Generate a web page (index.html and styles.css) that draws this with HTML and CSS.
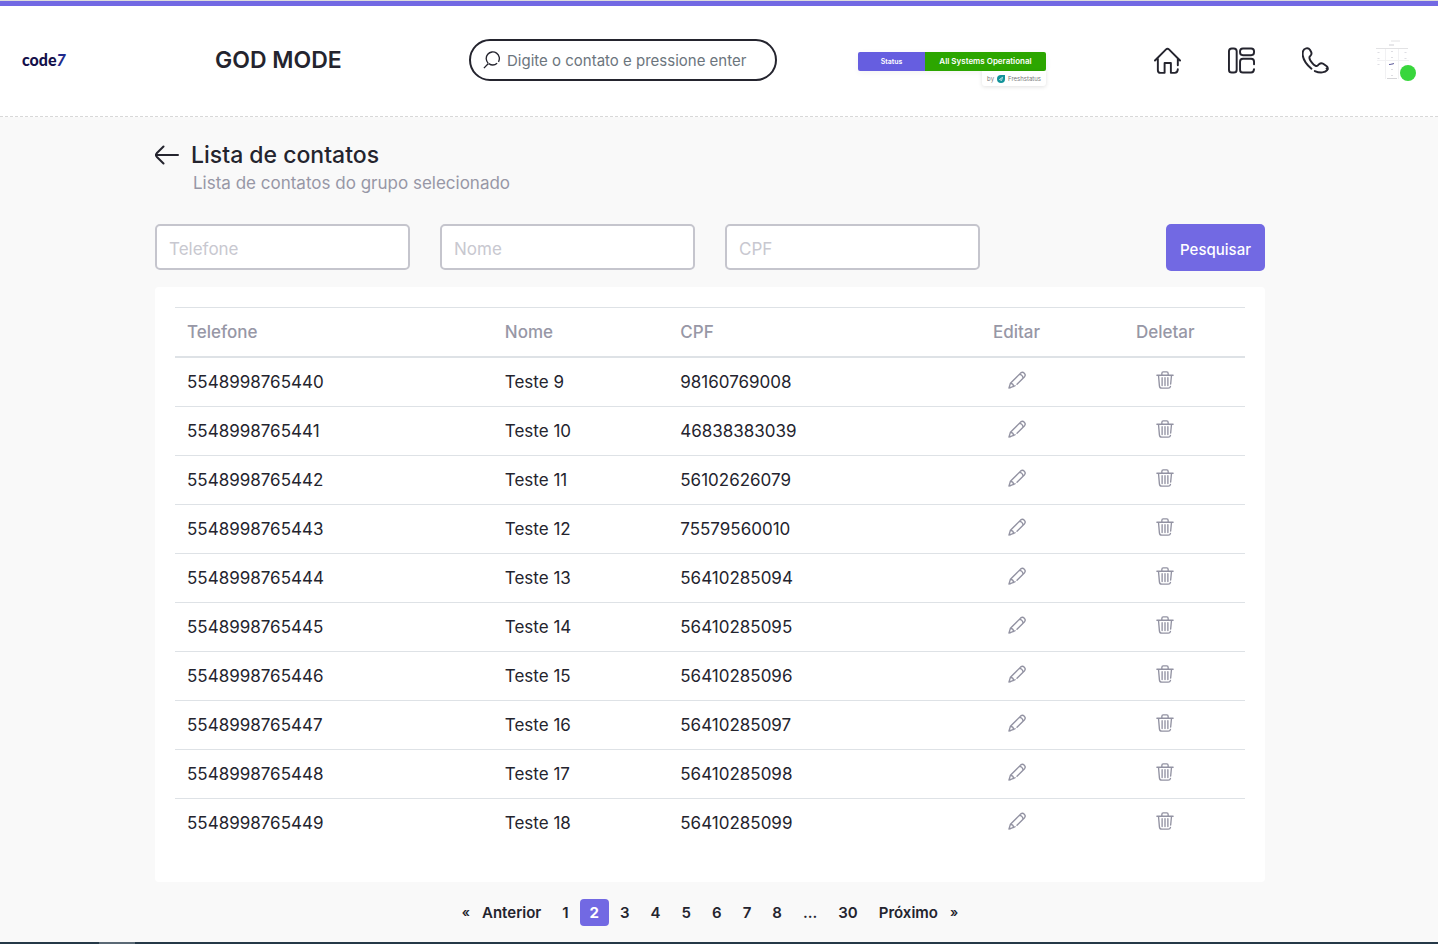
FILE: index.html
```
<!DOCTYPE html>
<html lang="pt-BR">
<head>
<meta charset="utf-8">
<meta name="viewport" content="width=device-width, initial-scale=1">
<title>Lista de contatos</title>
<link rel="stylesheet" href="styles.css">
</head>
<body>
<svg class="sprite" aria-hidden="true">
  <symbol id="pencil" viewBox="0 0 20 20">
    <path d="M6.2 17.2 1 19l1.700-5.300M2.700 13.700 14.200 2.100q2-1.600 3.900.3t.3 3.900L10 14.700M2.700 13.700q3.500.3 3.500 3.500l1.700-.8M12.600 3.700q3.500.2 4.100 4.100M1.500 17.500l1.200 1.200"/>
  </symbol>
  <symbol id="trash" viewBox="0 0 20 20">
    <path d="M1 4.700h18M6.500 4.500V2.800q0-1.800 1.500-1.800h4q1.500 0 1.500 1.800v1.700M2.800 5l1 11.500q.2 2.500 2.600 2.500h7.200q2.100 0 2.500-1.900M17.200 5 16.300 14.500M6.800 7.500v8.600M10 7.500v8.600M13.200 7.500v8.600"/>
  </symbol>
</svg>

<header class="topbar">
  <a class="logo" href="#">code<span class="logo-seven">7</span></a>
  <p class="mode">GOD MODE</p>
  <label class="search">
    <svg class="search-icon" viewBox="0 0 20 20" aria-hidden="true"><path d="M1 19 6 13.800M5.700 13.500A7.300 7.300 0 1 1 17.200 12M15.700 13.500A7.300 7.300 0 0 1 6.500 14"/></svg>
    <input class="search-input" type="text" aria-label="Buscar contato" placeholder="Digite o contato e pressione enter">
  </label>
  <a class="status" href="#">
    <span class="status-bar"><span class="status-label">Status</span><span class="status-value">All Systems Operational</span></span>
    <span class="status-by">by
      <svg class="status-icon" viewBox="0 0 8 8" aria-hidden="true"><path d="M4 0h4v4a4 4 0 1 1-4-4z" fill="#12939a"/><path d="M2.500 4.500 5.500 2.300 4.600 5.500z" fill="none" stroke="#fff" stroke-width=".7"/></svg>
      Freshstatus</span>
  </a>
  <nav class="actions" aria-label="Principal">
    <a class="action" href="#" aria-label="Início"><svg class="action-icon" viewBox="0 0 28 28" aria-hidden="true"><path d="M1 14 12.500 2.500q1.500-1.500 3 0L27 14M4 12v12q0 2.800 2.800 2.800H11V16.500h6.500v10.300h4q3 0 3.200-3.800M24.700 12v7"/></svg></a>
    <a class="action" href="#" aria-label="Painel"><svg class="action-icon" viewBox="0 0 28 28" aria-hidden="true"><rect x="1" y="1.500" width="8" height="25" rx="3"/><rect x="12.500" y="1.500" width="14.500" height="7" rx="3"/><path d="M27 18V15.200q0-3-3-3h-8.500q-3 0-3 3v8.300q0 3 3 3H24q2.800 0 3-3.500"/></svg></a>
    <a class="action" href="#" aria-label="Telefone"><svg class="action-icon" viewBox="0 0 28 28" aria-hidden="true"><path d="M9.800 22.500C5 18.500 1.500 13.500.8 8.800.3 5 1.800 2 4.300 1.400c1.600-.4 3 0 3.900 1.400l1.300 2.400c.7 1.400.3 2.600-.5 3.600l-1 1.200c-1 1.500.7 4.300 2.700 6.700s4.200 3.800 5.500 2.600l1.500-1.500c1.500-1.300 2.900-1.300 4.300-.4l3.300 2.300c1.500 1.100 2 2.600.8 4.200-2 2.700-7.200 3.500-12.800 1M25.500 22.300l1.300.6"/></svg></a>
    <button class="avatar" type="button" aria-label="Perfil">
      <svg class="avatar-image" viewBox="0 0 40 40" aria-hidden="true">
        <path d="M15 1h9M0 8.500h32" stroke="#e2e2e4"/><path d="M13 5h5" stroke="#cfcfd4"/>
        <path d="M9.500 9v30M22.500 9v30M1 20.500h32" stroke="#f1f1f3"/><path d="M11 38.500h10" stroke="#d5d5d8"/>
        <path d="M2.500 12v17M16 11v27M29.500 12v8" stroke="#dedee3" stroke-width="2" stroke-dasharray="1 5"/>
        <path d="M13 24.500q3 0 5-1" stroke="#625f9f" fill="none"/>
      </svg>
      <span class="avatar-dot"></span>
    </button>
  </nav>
</header>

<main class="content">
  <div class="heading">
    <a class="back" href="#" aria-label="Voltar"><svg class="back-icon" viewBox="0 0 24 20" aria-hidden="true"><path d="M23 10H1M8.500 1.500 1.700 8.300q-1.500 1.700 0 3.400l6.800 6.800"/></svg></a>
    <h1 class="title">Lista de contatos</h1>
    <p class="subtitle">Lista de contatos do grupo selecionado</p>
  </div>
  <form class="filters">
    <input class="field" type="text" aria-label="Telefone" placeholder="Telefone">
    <input class="field" type="text" aria-label="Nome" placeholder="Nome">
    <input class="field" type="text" aria-label="CPF" placeholder="CPF">
    <button class="submit" type="button">Pesquisar</button>
  </form>
  <section class="card">
    <table class="contacts">
      <colgroup><col class="col-phone"><col class="col-name"><col class="col-cpf"><col class="col-edit"><col class="col-delete"></colgroup>
      <thead>
        <tr><th>Telefone</th><th>Nome</th><th>CPF</th><th class="center">Editar</th><th class="center">Deletar</th></tr>
      </thead>
      <tbody>
        <tr><td>5548998765440</td><td>Teste 9</td><td>98160769008</td><td class="center"><button class="tool" type="button" aria-label="Editar"><svg class="tool-icon"><use href="#pencil"/></svg></button></td><td class="center"><button class="tool" type="button" aria-label="Deletar"><svg class="tool-icon"><use href="#trash"/></svg></button></td></tr>
        <tr><td>5548998765441</td><td>Teste 10</td><td>46838383039</td><td class="center"><button class="tool" type="button" aria-label="Editar"><svg class="tool-icon"><use href="#pencil"/></svg></button></td><td class="center"><button class="tool" type="button" aria-label="Deletar"><svg class="tool-icon"><use href="#trash"/></svg></button></td></tr>
        <tr><td>5548998765442</td><td>Teste 11</td><td>56102626079</td><td class="center"><button class="tool" type="button" aria-label="Editar"><svg class="tool-icon"><use href="#pencil"/></svg></button></td><td class="center"><button class="tool" type="button" aria-label="Deletar"><svg class="tool-icon"><use href="#trash"/></svg></button></td></tr>
        <tr><td>5548998765443</td><td>Teste 12</td><td>75579560010</td><td class="center"><button class="tool" type="button" aria-label="Editar"><svg class="tool-icon"><use href="#pencil"/></svg></button></td><td class="center"><button class="tool" type="button" aria-label="Deletar"><svg class="tool-icon"><use href="#trash"/></svg></button></td></tr>
        <tr><td>5548998765444</td><td>Teste 13</td><td>56410285094</td><td class="center"><button class="tool" type="button" aria-label="Editar"><svg class="tool-icon"><use href="#pencil"/></svg></button></td><td class="center"><button class="tool" type="button" aria-label="Deletar"><svg class="tool-icon"><use href="#trash"/></svg></button></td></tr>
        <tr><td>5548998765445</td><td>Teste 14</td><td>56410285095</td><td class="center"><button class="tool" type="button" aria-label="Editar"><svg class="tool-icon"><use href="#pencil"/></svg></button></td><td class="center"><button class="tool" type="button" aria-label="Deletar"><svg class="tool-icon"><use href="#trash"/></svg></button></td></tr>
        <tr><td>5548998765446</td><td>Teste 15</td><td>56410285096</td><td class="center"><button class="tool" type="button" aria-label="Editar"><svg class="tool-icon"><use href="#pencil"/></svg></button></td><td class="center"><button class="tool" type="button" aria-label="Deletar"><svg class="tool-icon"><use href="#trash"/></svg></button></td></tr>
        <tr><td>5548998765447</td><td>Teste 16</td><td>56410285097</td><td class="center"><button class="tool" type="button" aria-label="Editar"><svg class="tool-icon"><use href="#pencil"/></svg></button></td><td class="center"><button class="tool" type="button" aria-label="Deletar"><svg class="tool-icon"><use href="#trash"/></svg></button></td></tr>
        <tr><td>5548998765448</td><td>Teste 17</td><td>56410285098</td><td class="center"><button class="tool" type="button" aria-label="Editar"><svg class="tool-icon"><use href="#pencil"/></svg></button></td><td class="center"><button class="tool" type="button" aria-label="Deletar"><svg class="tool-icon"><use href="#trash"/></svg></button></td></tr>
        <tr><td>5548998765449</td><td>Teste 18</td><td>56410285099</td><td class="center"><button class="tool" type="button" aria-label="Editar"><svg class="tool-icon"><use href="#pencil"/></svg></button></td><td class="center"><button class="tool" type="button" aria-label="Deletar"><svg class="tool-icon"><use href="#trash"/></svg></button></td></tr>
      </tbody>
    </table>
  </section>
  <nav class="pagination" aria-label="Paginação">
    <a class="page page-step" href="#"><span class="page-arrow">«</span><span>Anterior</span></a>
    <a class="page" href="#">1</a>
    <a class="page page-current" href="#" aria-current="page">2</a>
    <a class="page" href="#">3</a>
    <a class="page" href="#">4</a>
    <a class="page" href="#">5</a>
    <a class="page" href="#">6</a>
    <a class="page" href="#">7</a>
    <a class="page" href="#">8</a>
    <span class="page">...</span>
    <a class="page" href="#">30</a>
    <a class="page page-step" href="#"><span>Próximo</span><span class="page-arrow">»</span></a>
  </nav>
</main>
<footer class="bottom-strip"></footer>
</body>
</html>
```
FILE: styles.css
```
* { box-sizing: border-box; }

body {
  margin: 0;
  min-height: 100vh;
  display: flex;
  flex-direction: column;
  background: #f9f9f9;
  color: #24242e;
  font-family: Inter, "Liberation Sans", sans-serif;
  font-size: 17px;
  line-height: 24px;
}

a { color: inherit; text-decoration: none; }
button, input { font: inherit; }
button { padding: 0; border: 0; background: none; cursor: pointer; }
svg { display: block; }
p, h1 { margin: 0; }

.sprite { position: absolute; width: 0; height: 0; }

.topbar {
  display: grid;
  grid-template-columns: 193fr 254fr 389fr 296fr 262fr;
  align-items: center;
  padding: 34px 22px 30px;
  background: #fff;
  border-bottom: 1px dashed #d8d8d8;
  box-shadow: inset 0 1px #dcdcdc, inset 0 6px #7269e3;
}

.logo {
  color: #14104a;
  font: 900 16px/20px Lato, sans-serif;
}
.logo-seven { color: #1f2a8c; font-style: italic; }

.mode { font-size: 23px; font-weight: 600; }

.search {
  display: flex;
  align-items: center;
  gap: 6px;
  width: 308px;
  height: 42px;
  padding: 0 12px;
  border: 2px solid #24242e;
  border-radius: 21px;
}
.search-icon { flex: none; width: 18px; height: 18px; fill: none; stroke: #24242e; stroke-width: 1.5; }
.search-input {
  flex: 1;
  min-width: 0;
  padding: 2px 0 0;
  border: 0;
  outline: 0;
  background: none;
  font-size: 15px;
}
.search-input::placeholder { color: #6c757d; opacity: 1; }

.status {
  display: flex;
  flex-direction: column;
  align-items: flex-end;
  width: 188px;
  padding-top: 18px;
}
.status-bar {
  display: grid;
  grid-template-columns: 67px 1fr;
  width: 100%;
  line-height: 19px;
  border-radius: 2px;
  overflow: hidden;
  color: #fff;
  font-weight: 600;
  text-align: center;
  box-shadow: 0 2px 6px #0000000d;
}
.status-label { background: #665ee0; font-size: 7px; }
.status-value { background: #2ca600; font-size: 8px; }
.status-by {
  display: flex;
  align-items: center;
  gap: 3px;
  padding: 0 5px;
  border-radius: 0 0 3px 3px;
  background: #fff;
  color: #777;
  font-size: 6px;
  line-height: 15px;
  box-shadow: 0 1px 4px #0000001f;
}
.status-icon { width: 8px; height: 8px; }

.actions { display: flex; justify-content: space-between; align-items: center; }
.action-icon { width: 27px; height: 27px; fill: none; stroke: #24242e; stroke-width: 2; stroke-linecap: round; stroke-linejoin: round; }
.avatar { position: relative; width: 40px; height: 42px; }
.avatar-image { width: 40px; height: 40px; }
.avatar-dot {
  position: absolute;
  right: 0;
  bottom: 0;
  width: 16px;
  height: 16px;
  border-radius: 50%;
  background: #38d63c;
}

.content {
  flex: 1;
  width: 100%;
  max-width: 1128px;
  padding: 24px 18px 16px 0;
  align-self: center;
}

.heading {
  display: grid;
  grid-template-columns: 24px 1fr;
  column-gap: 12px;
  align-items: center;
}
.back-icon { width: 24px; height: 20px; fill: none; stroke: #24242e; stroke-width: 2; stroke-linecap: round; }
.title { font-size: 23px; line-height: 28px; font-weight: 500; }
.subtitle { grid-column: 2; padding-left: 2px; line-height: 28px; color: #9797a6; }

.filters {
  display: grid;
  grid-template-columns: repeat(4, 1fr);
  gap: 30px;
  margin-top: 27px;
}
.field {
  width: 100%;
  min-width: 0;
  height: 46px;
  padding: 4px 12px 0;
  border: 2px solid #c5c5cd;
  border-radius: 5px;
  background: #fff;
  color: #24242e;
}
.field::placeholder { color: #c8c8d0; opacity: 1; }
.submit {
  justify-self: end;
  height: 47px;
  padding: 4px 14px 0;
  border-radius: 5px;
  background: #7269e3;
  color: #fff;
  font-size: 15px;
  font-weight: 500;
}

.card { margin-top: 16px; padding: 20px 20px 35px; border-radius: 4px; background: #fff; }

.contacts { width: 100%; table-layout: fixed; border-collapse: separate; border-spacing: 0; }
.col-phone { width: 29.7%; }
.col-name { width: 16.4%; }
.col-cpf { width: 26.1%; }
.col-edit { width: 12.9%; }
.col-delete { width: 14.9%; }
.contacts th, .contacts td { padding: 12px; text-align: left; }
.contacts th {
  border-top: 1px solid #dee2e6;
  border-bottom: 2px solid #dee2e6;
  color: #9797a6;
  font-weight: 500;
}
.contacts td { border-top: 1px solid #dee2e6; }
.contacts tbody tr:first-child td { border-top: 0; }
.contacts .center { text-align: center; }
.contacts td.center { padding: 0 12px 6px; }
.tool { display: inline-block; vertical-align: middle; color: #9292a2; }
.tool-icon { width: 18px; height: 18px; fill: none; stroke: currentColor; stroke-width: 1.5; stroke-linecap: round; stroke-linejoin: round; }

.pagination {
  display: flex;
  justify-content: center;
  gap: 1px;
  margin-top: 17px;
  font-size: 15px;
  line-height: 27px;
  font-weight: 600;
}
.page { padding: 0 10px; border-radius: 4px; }
.page-step { display: flex; gap: 12px; }
.page-arrow { font-size: 13px; }
.page-current { background: #7269e3; color: #fff; font-weight: 700; }

.bottom-strip { height: 2px; background: linear-gradient(90deg, #253847 99px, #5a6975 99px 135px, #253847 135px); }
```
